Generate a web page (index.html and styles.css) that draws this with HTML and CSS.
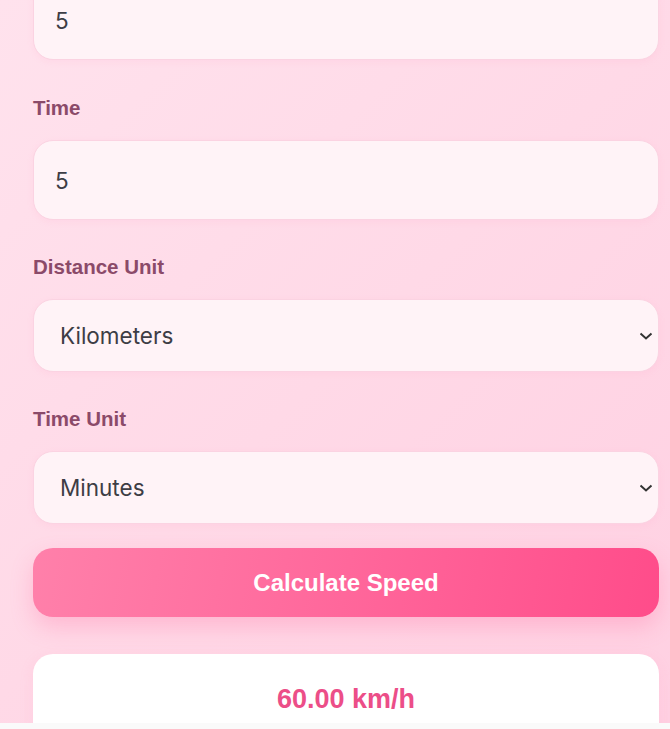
FILE: index.html
```html
<!DOCTYPE html>
<html lang="en">
<head>
<meta charset="utf-8">
<title>Speed Calculator</title>
<link rel="stylesheet" href="styles.css">
</head>
<body>
<div class="viewport">
  <form class="calc">
    <div class="group group-first">
      <input class="field" type="text" value="5" aria-label="Distance">
    </div>
    <div class="group">
      <label class="label" for="time">Time</label>
      <input class="field" id="time" type="text" value="5">
    </div>
    <div class="group">
      <label class="label" for="dunit">Distance Unit</label>
      <select class="field select" id="dunit">
        <option>Kilometers</option>
        <option>Miles</option>
        <option>Meters</option>
      </select>
    </div>
    <div class="group group-last">
      <label class="label" for="tunit">Time Unit</label>
      <select class="field select" id="tunit">
        <option>Minutes</option>
        <option>Hours</option>
        <option>Seconds</option>
      </select>
    </div>
    <button class="btn" type="button">Calculate Speed</button>
    <div class="result">
      <div class="result-value">60.00 km/h</div>
    </div>
  </form>
</div>
</body>
</html>
```
FILE: styles.css
```css
html, body {
  margin: 0;
  padding: 0;
}
body {
  background: #fafafa;
  font-family: "Liberation Sans", Arial, sans-serif;
}
.viewport {
  height: 723px;
  overflow: hidden;
  background: linear-gradient(135deg, #ffe2ed 0%, #ffd9e7 50%, #ffd0e2 100%);
  padding: 0 11px 0 33px;
  box-sizing: border-box;
}
.calc {
  display: flex;
  flex-direction: column;
  margin-top: -20px;
}
.group {
  display: flex;
  flex-direction: column;
  margin-bottom: 35px;
}
.group-first {
  margin-bottom: 36px;
}
.group-last {
  margin-bottom: 24px;
}
.label {
  font-family: "Liberation Sans", Arial, sans-serif;
  font-weight: 700;
  font-size: 20.5px;
  line-height: 24px;
  color: #8b4a69;
  margin-bottom: 20px;
}
.field {
  box-sizing: border-box;
  width: 100%;
  height: 80px;
  flex: none;
  border: 1.5px solid #fbd3e2;
  border-radius: 20px;
  background: #fff3f7;
  padding: 0 20px 0 21px;
  font-family: Inter, "Open Sans", sans-serif;
  font-size: 22.5px;
  color: #3d3d45;
  outline: none;
  box-shadow: 0 2px 6px rgba(255, 160, 195, 0.12);
}
.select {
  height: 73px;
  padding-left: 26px;
  appearance: none;
  -webkit-appearance: none;
  background-image: url("data:image/svg+xml,%3Csvg xmlns='http://www.w3.org/2000/svg' width='14' height='8' viewBox='0 0 14 8'%3E%3Cpath d='M1.5 1.5 L7 6.5 L12.5 1.5' fill='none' stroke='%23333' stroke-width='2'/%3E%3C/svg%3E");
  background-repeat: no-repeat;
  background-position: right 5px center;
  background-size: 14px 8px;
}
.btn {
  height: 69px;
  flex: none;
  border: none;
  border-radius: 20px;
  background: linear-gradient(100deg, #ff80aa 0%, #ff679b 50%, #ff4c8a 100%);
  color: #fff;
  font-family: "Liberation Sans", Arial, sans-serif;
  font-weight: 700;
  font-size: 24px;
  box-shadow: 0 10px 22px rgba(255, 100, 155, 0.28);
  margin-bottom: 37px;
  cursor: pointer;
}
.result {
  background: #ffffff;
  border-radius: 20px;
  padding: 30px 20px;
  text-align: center;
  box-shadow: 0 4px 14px rgba(255, 150, 190, 0.15);
}
.result-value {
  font-family: "Liberation Sans", Arial, sans-serif;
  font-weight: 700;
  font-size: 27px;
  color: #ec4e88;
}
```
